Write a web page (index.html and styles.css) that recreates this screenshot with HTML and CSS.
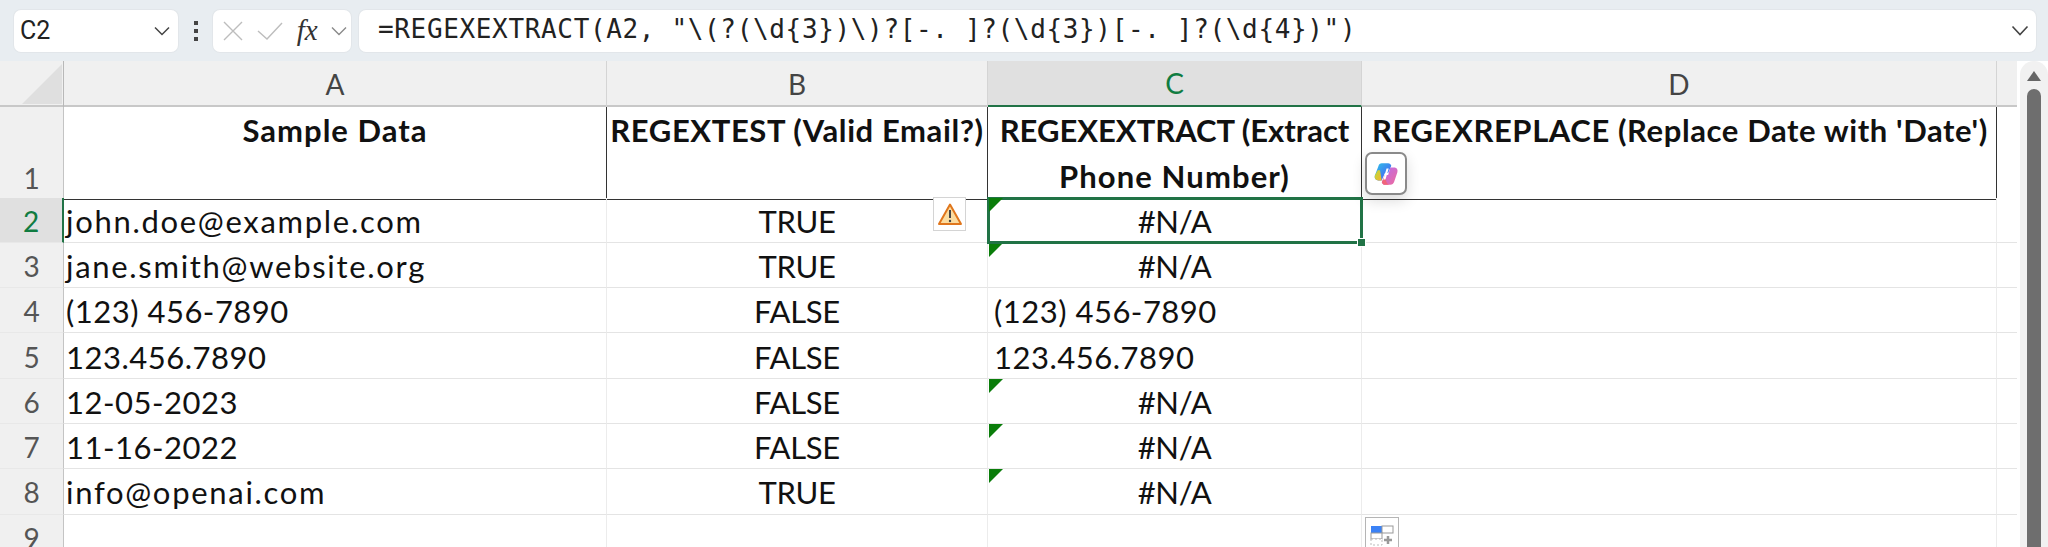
FILE: index.html
```html
<!DOCTYPE html>
<html lang="en">
<head>
<meta charset="utf-8">
<title>Regex functions</title>
<link rel="stylesheet" href="styles.css">
</head>
<body>
<div class="toolbar">
  <div class="box namebox"><span class="name">C2</span>
    <svg class="chev" width="18" height="10" viewBox="0 0 18 10"><path d="M2 1.500l7 7 7-7" fill="none" stroke="#444" stroke-width="1.500"/></svg>
  </div>
  <div class="dots"><i></i><i></i><i></i></div>
  <div class="box fxbox">
    <svg width="22" height="22" viewBox="0 0 22 22"><path d="M2 2l18 18M20 2L2 20" fill="none" stroke="#bdbdbd" stroke-width="1.400"/></svg>
    <svg width="28" height="20" viewBox="0 0 28 20"><path d="M2 10l9 8L26 2" fill="none" stroke="#bdbdbd" stroke-width="1.400"/></svg>
    <span class="fx">fx</span>
    <svg width="18" height="10" viewBox="0 0 18 10"><path d="M2 1.500l7 7 7-7" fill="none" stroke="#8a8a8a" stroke-width="1.400"/></svg>
  </div>
  <div class="box formula"><span class="ftext">=REGEXEXTRACT(A2, "\(?(\d{3})\)?[-. ]?(\d{3})[-. ]?(\d{4})")</span>
    <svg class="chev" width="18" height="11" viewBox="0 0 18 11"><path d="M1.500 1.500L9 9.500l7.500-8" fill="none" stroke="#444" stroke-width="1.600"/></svg>
  </div>
</div>
<div class="main">
  <div class="sheet">
    <div class="row head">
      <div class="corner"><svg width="40" height="40" viewBox="0 0 40 40"><path d="M40 0v40H0z" fill="#dfdfdf"/></svg></div>
      <div class="colh">A</div><div class="colh">B</div><div class="colh sel">C</div><div class="colh">D</div><div class="colh rest"></div>
    </div>
    <div class="row r1">
      <div class="rowh">1</div>
      <div class="cell hd wide">Sample Data</div>
      <div class="cell hd">REGEXTEST (Valid Email?)</div>
      <div class="cell hd hc"><span class="l1">REGEXEXTRACT (Extract</span><span class="l2">Phone Number)</span></div>
      <div class="cell hd hd4">REGEXREPLACE (Replace Date with 'Date')
        <div class="copilot"><svg width="28" height="28" viewBox="0 0 26 26">
          <defs>
            <linearGradient id="g1" x1="0" y1="0" x2="1" y2="1"><stop offset="0" stop-color="#2ec5e8"/><stop offset=".6" stop-color="#3f7ff0"/><stop offset="1" stop-color="#7a5cf0"/></linearGradient>
            <linearGradient id="g2" x1="0" y1="0" x2="1" y2="1"><stop offset="0" stop-color="#b76cf0"/><stop offset="1" stop-color="#f06a9a"/></linearGradient>
            <linearGradient id="g3" x1="0" y1="0" x2="1" y2="1"><stop offset="0" stop-color="#b8dc3c"/><stop offset="1" stop-color="#f5b52e"/></linearGradient>
          </defs>
          <path d="M9 3h6c1.500 0 2.500 1 2.900 2.400L15 12h-3L9 19H6C3.500 19 2 17 2.700 14.500L6 5.500C6.500 4 7.500 3 9 3z" fill="url(#g1)"/>
          <path d="M17 7h3.500C23 7 24.300 9 23.500 11.500L20.500 20.500C20 22 18.800 23 17 23h-5c-1.500 0-2.500-1-2.900-2.400L12 14h3z" fill="url(#g2)"/>
          <path d="M2.700 14.500L5 10c.7-1 2-1 2.500 0L9 19H6C3.500 19 2 17 2.700 14.500z" fill="url(#g3)"/>
          <path d="M12 14l-2.900 6.600C9.500 22 10.500 23 12 23h4c-2-1-3-3-3-5z" fill="#f0647a"/>
          <path d="M13.500 8h2l-3 10h-2z" fill="#fff"/>
        </svg></div>
      </div>
      <div class="cell blank nob"></div>
    </div>
    <div class="row">
      <div class="rowh act">2</div>
      <div class="cell lc">john.doe@example.com</div>
      <div class="cell ctr">TRUE
        <div class="warn"><svg width="26" height="26" viewBox="0 0 26 26"><path d="M13 3.500L24 23H2z" fill="#fbdca0" stroke="#e0761c" stroke-width="2" stroke-linejoin="round"/><path d="M13 9v8" stroke="#444" stroke-width="2"/><circle cx="13" cy="20" r="1.200" fill="#444"/></svg></div>
      </div>
      <div class="cell ctr err active">#N/A<span class="handle"></span></div>
      <div class="cell"></div><div class="cell blank"></div>
    </div>
    <div class="row">
      <div class="rowh">3</div>
      <div class="cell lc">jane.smith@website.org</div>
      <div class="cell ctr">TRUE</div>
      <div class="cell ctr err">#N/A</div>
      <div class="cell"></div><div class="cell blank"></div>
    </div>
    <div class="row">
      <div class="rowh">4</div>
      <div class="cell num">(123) 456-7890</div>
      <div class="cell ctr">FALSE</div>
      <div class="cell num ind">(123) 456-7890</div>
      <div class="cell"></div><div class="cell blank"></div>
    </div>
    <div class="row">
      <div class="rowh">5</div>
      <div class="cell num">123.456.7890</div>
      <div class="cell ctr">FALSE</div>
      <div class="cell num ind">123.456.7890</div>
      <div class="cell"></div><div class="cell blank"></div>
    </div>
    <div class="row">
      <div class="rowh">6</div>
      <div class="cell num">12-05-2023</div>
      <div class="cell ctr">FALSE</div>
      <div class="cell ctr err">#N/A</div>
      <div class="cell"></div><div class="cell blank"></div>
    </div>
    <div class="row">
      <div class="rowh">7</div>
      <div class="cell num">11-16-2022</div>
      <div class="cell ctr">FALSE</div>
      <div class="cell ctr err">#N/A</div>
      <div class="cell"></div><div class="cell blank"></div>
    </div>
    <div class="row">
      <div class="rowh">8</div>
      <div class="cell lc">info@openai.com</div>
      <div class="cell ctr">TRUE</div>
      <div class="cell ctr err">#N/A</div>
      <div class="cell"></div><div class="cell blank"></div>
    </div>
    <div class="row">
      <div class="rowh">9</div>
      <div class="cell"></div>
      <div class="cell"></div>
      <div class="cell"></div>
      <div class="cell pastecell">
        <div class="paste"><svg width="30" height="26" viewBox="0 0 30 26"><rect x="4" y="6" width="11" height="7" fill="#3b82f6"/><rect x="15" y="6" width="11" height="7" fill="#fff" stroke="#999"/><rect x="4" y="13" width="11" height="6" fill="#fff" stroke="#999"/><rect x="4" y="19" width="11" height="6" fill="#fff" stroke="#bbb" stroke-dasharray="2 2"/><path d="M21 16v8M17 20h8" stroke="#999" stroke-width="2.500"/></svg></div>
      </div>
      <div class="cell blank"></div>
    </div>
  </div>
  <div class="scroll">
    <svg width="16" height="12" viewBox="0 0 16 12"><path d="M8 1l7 10H1z" fill="#666"/></svg>
    <div class="thumb"></div>
  </div>
</div>
</body>
</html>
```
FILE: styles.css
```css
* { box-sizing: border-box; }
html, body { margin: 0; height: 100%; overflow: hidden; background: #fff; }
body { display: flex; flex-direction: column; font-family: "Lato", "Liberation Sans", sans-serif; color: #111; }

.toolbar { height: 61px; flex: none; background: #e8edf1; display: flex; align-items: center; padding: 0 12px 0 14px; gap: 8px; }
.box { height: 42px; background: #fff; border-radius: 7px; display: flex; align-items: center; box-shadow: 0 0 0 1px #e2e6ea; }
.namebox { width: 164px; padding: 0 7px 0 6px; justify-content: space-between; }
.name { font: 25px "Roboto", sans-serif; color: #222; }
.dots { width: 19px; display: flex; flex-direction: column; align-items: center; gap: 4px; }
.dots i { width: 4px; height: 4px; background: #444; }
.fxbox { width: 138px; padding: 0 3px 0 9px; justify-content: space-between; }
.fx { font: italic 29px "Liberation Serif", serif; color: #333; }
.formula { flex: 1; padding: 0 7px 0 19px; justify-content: space-between; }
.ftext { font: 26px "DejaVu Sans Mono", monospace; color: #222; letter-spacing: .65px; white-space: pre; padding-bottom: 3px; }

.main { flex: 1; min-height: 0; display: flex; background: #fff; }
.sheet { flex: 1; min-width: 0; }
.row { display: grid; grid-template-columns: 64px 543px 381px 374px 635px 1fr; height: 45.3px; }
.head { height: 46px; background: #f0f0f0; border-bottom: 2px solid #c8c8c8; }
.corner { border-right: 1px solid #b8b8b8; display: flex; justify-content: flex-end; align-items: flex-end; padding: 0 1px 3px 0; }
.colh { font-size: 28px; color: #444; display: flex; align-items: center; justify-content: center; border-right: 1px solid #d4d4d4; }
.colh.sel { background: #e0e0e0; color: #107c41; border-bottom: 2px solid #217346; height: 46px; }
.colh.rest { border-right: 0; }
.rowh { background: #f0f0f0; font-size: 28px; color: #555; display: flex; align-items: center; justify-content: center; border-right: 1px solid #c4c4c4; border-bottom: 1px solid #e8e8e8; padding-top: 2px; }
.rowh.act { background: #e0e0e0; color: #107c41; border-right: 2px solid #217346; }
.cell { position: relative; font-size: 31px; color: #111; display: flex; align-items: center; padding: 2px 2px 0; border-right: 1px solid #ececec; border-bottom: 1px solid #e4e4e4; white-space: nowrap; letter-spacing: -.3px; }
.cell.blank { border: 0; border-bottom: 1px solid #e4e4e4; }
.cell.nob { border-bottom: 0; }
.lc { letter-spacing: 1.7px; }
.num { letter-spacing: .5px; }
.ind { padding-left: 6px; }
.ctr { justify-content: center; }
.r1 { height: 90.5px; }
.r1 .rowh { align-items: flex-end; padding-top: 0; padding-bottom: 4px; }
.hd { font-weight: 700; justify-content: center; align-items: flex-start; text-align: center; white-space: normal; padding: 0; line-height: 46px; letter-spacing: .6px; border-right: 1px solid #333; border-bottom: 1px solid #333; }
.wide { letter-spacing: 1px; }
.hd4 { justify-content: flex-start; padding-left: 10px; }
.hc { flex-direction: column; align-items: center; }
.l1 { letter-spacing: 0; }
.l2 { letter-spacing: 1.1px; }

.err::before { content: ""; position: absolute; left: 1px; top: 0; border-style: solid; border-width: 14px 14px 0 0; border-color: #0a7d0a transparent transparent transparent; }
.active { outline: 3px solid #217346; outline-offset: -2px; z-index: 2; }
.handle { position: absolute; right: -5px; bottom: -5px; width: 9px; height: 9px; background: #217346; border: 1px solid #fff; z-index: 3; }

.warn { position: absolute; right: 21px; top: -1px; width: 33px; height: 34px; background: #fff; border: 1px solid #d4d4d4; display: flex; align-items: center; justify-content: center; z-index: 2; }
.copilot { position: absolute; left: 3px; top: 45px; width: 42px; height: 43px; background: #fff; border: 2px solid #8a8a8a; border-radius: 7px; display: flex; align-items: center; justify-content: center; box-shadow: 0 6px 14px rgba(0,0,0,.14); z-index: 4; }
.paste { position: absolute; left: 3px; top: 2px; width: 34px; height: 40px; background: #fff; border: 1px solid #b5b5b5; display: flex; align-items: flex-start; justify-content: center; padding-top: 2px; z-index: 2; }

.scroll { width: 28px; flex: none; margin-left: 3px; background: #f1f1f1; border-radius: 14px 14px 0 0; display: flex; flex-direction: column; align-items: center; padding-top: 9px; gap: 7px; }
.thumb { width: 14px; flex: 1; background: #6e6e6e; border-radius: 7px 7px 0 0; }
```
